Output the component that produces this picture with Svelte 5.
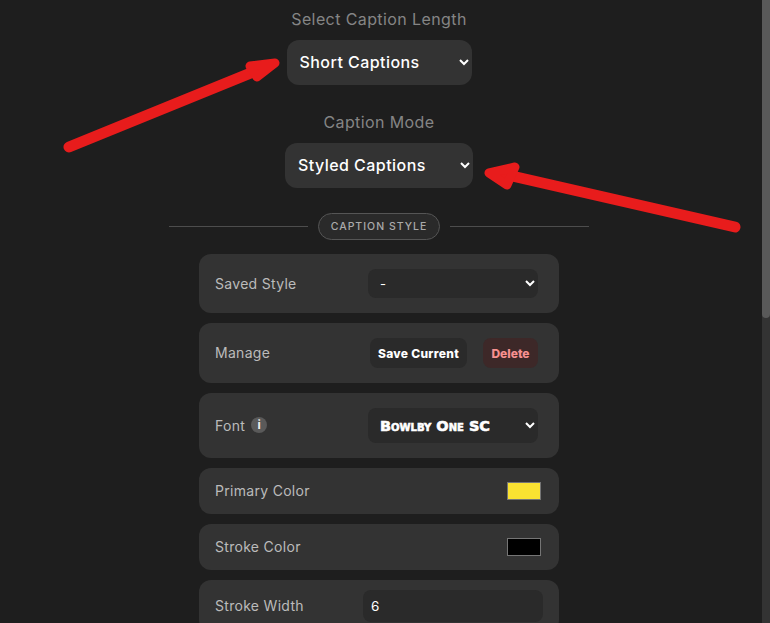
<script>
	let length = $state('short');
	let mode = $state('styled');
	let saved = $state('-');
	let font = $state('Bowlby One SC');
	let strokeWidth = $state(6);
</script>

<div class="page">
	<div class="field first">
		<label for="length">Select Caption Length</label>
		<select id="length" class="big len" bind:value={length}>
			<option value="short">Short Captions</option>
			<option value="long">Long Captions</option>
		</select>
	</div>

	<div class="field second">
		<label for="mode">Caption Mode</label>
		<select id="mode" class="big mode" bind:value={mode}>
			<option value="styled">Styled Captions</option>
			<option value="plain">Plain Captions</option>
		</select>
	</div>

	<div class="divider">
		<span class="line"></span>
		<span class="pill">CAPTION STYLE</span>
		<span class="line"></span>
	</div>

	<div class="rows">
		<div class="row saved">
			<span class="name">Saved Style</span>
			<select class="small" bind:value={saved}>
				<option>-</option>
			</select>
		</div>

		<div class="row manage">
			<span class="name">Manage</span>
			<div class="buttons">
				<button class="save">Save Current</button>
				<button class="delete">Delete</button>
			</div>
		</div>

		<div class="row fontrow">
			<span class="name">Font <i class="info">i</i></span>
			<select class="small bowlby" bind:value={font}>
				<option>Bowlby One SC</option>
			</select>
		</div>

		<div class="row color">
			<span class="name">Primary Color</span>
			<span class="swatch" style="background: #fae231"></span>
		</div>

		<div class="row color">
			<span class="name">Stroke Color</span>
			<span class="swatch" style="background: #000000"></span>
		</div>

		<div class="row widthrow">
			<span class="name">Stroke Width</span>
			<input type="text" bind:value={strokeWidth} />
		</div>
	</div>

	<!-- red annotation arrows drawn over the screenshot -->
	<svg class="arrows" width="770" height="623" viewBox="0 0 770 623">
		<g fill="#e81c1c" stroke="#e81c1c" stroke-linecap="round" stroke-linejoin="round">
			<path d="M69 147 L258 70" stroke-width="11" fill="none" />
			<path d="M250 66 L275 63 L257 77 Z" stroke-width="9" />
			<path d="M735 227 L512 176" stroke-width="11" fill="none" />
			<path d="M515 167 L489 173 L507 185 Z" stroke-width="9" />
		</g>
	</svg>
</div>

<div class="scrollbar"><div class="thumb"></div></div>

<style>
	:global(html) {
		background: #1e1e1e;
		overflow: hidden;
	}

	:global(body) {
		background: #1e1e1e;
	}

	.page {
		position: relative;
		box-sizing: border-box;
		padding: 7px 12px 0 0;
		font-family: Inter, "Noto Sans", sans-serif;
		color: #fff;
	}

	.field {
		display: flex;
		flex-direction: column;
		align-items: center;
	}

	.field label {
		font-size: 16px;
		line-height: 24px;
		letter-spacing: 0.4px;
		color: #858585;
	}

	.first label {
		margin-bottom: 9px;
	}

	.second {
		margin-top: 25px;
	}

	.second label {
		margin-bottom: 9px;
	}

	select,
	input,
	button {
		font-family: inherit;
		border: none;
		color: #fff;
		outline: none;
	}

	.big {
		height: 45px;
		background: #333333;
		border-radius: 12px;
		font-size: 16px;
		font-weight: 450;
		letter-spacing: 0.45px;
		padding: 0 5px 2px 9px;
	}

	.len {
		width: 185px;
	}

	.mode {
		width: 188px;
		padding-right: 7px;
	}

	.divider {
		display: flex;
		align-items: center;
		justify-content: center;
		gap: 10px;
		margin-top: 25px;
	}

	.line {
		width: 139px;
		height: 1px;
		background: #4d4d4d;
	}

	.pill {
		box-sizing: border-box;
		width: 122px;
		height: 27px;
		line-height: 25px;
		text-align: center;
		border: 1px solid #555555;
		border-radius: 14px;
		background: #2a2a2a;
		font-size: 10.5px;
		font-weight: 500;
		letter-spacing: 1px;
		color: #aaaaaa;
	}

	.rows {
		display: flex;
		flex-direction: column;
		gap: 10px;
		width: 360px;
		margin: 14px auto 0;
	}

	.row {
		display: flex;
		align-items: center;
		justify-content: space-between;
		box-sizing: border-box;
		padding: 0 16px;
		background: #333333;
		border-radius: 12px;
	}

	.name {
		display: flex;
		align-items: center;
		gap: 6px;
		padding-bottom: 1px;
		font-size: 14px;
		letter-spacing: 0.3px;
		color: #bbbbbb;
	}

	.saved {
		height: 59px;
	}

	.manage {
		height: 60px;
	}

	.fontrow {
		height: 65px;
	}

	.color {
		height: 46px;
		padding-right: 18px;
	}

	.widthrow {
		height: 52px;
		padding-right: 16px;
	}

	.small {
		width: 170px;
		margin-right: 5px;
		background: #2a2a2a;
		border-radius: 8px;
		font-size: 13px;
		padding: 0 5px 0 8px;
	}

	.saved .small {
		height: 29px;
	}

	.fontrow .small {
		height: 35px;
	}

	.bowlby {
		font-family: "DejaVu Sans", sans-serif;
		font-weight: 900;
		font-variant: small-caps;
		font-size: 14.5px;
		-webkit-text-stroke: 0.6px #fff;
	}

	.buttons {
		display: flex;
		gap: 16px;
		margin-right: 5px;
	}

	button {
		height: 30px;
		padding: 0;
		border-radius: 8px;
		font-size: 12px;
		font-weight: 800;
	}

	.save {
		width: 97px;
		background: #2a2a2a;
		letter-spacing: 0.3px;
	}

	.delete {
		width: 55px;
		background: #3d2828;
		color: #f79090;
	}

	.info {
		display: inline-block;
		width: 16px;
		height: 16px;
		line-height: 16px;
		border-radius: 50%;
		background: #5a5a5a;
		color: #eee;
		text-align: center;
		font-style: normal;
		font-size: 12px;
		font-weight: 700;
	}

	.swatch {
		box-sizing: border-box;
		width: 34px;
		height: 18px;
		border: 1px solid #757575;
	}

	input {
		box-sizing: border-box;
		width: 180px;
		height: 32px;
		padding: 0 8px;
		background: #2a2a2a;
		border-radius: 8px;
		font-size: 13.5px;
	}

	.arrows {
		position: absolute;
		top: 0;
		left: 0;
		pointer-events: none;
	}

	.scrollbar {
		position: fixed;
		top: 0;
		right: 0;
		bottom: 0;
		width: 8px;
		background: #333333;
	}

	.thumb {
		height: 318px;
		background: #595959;
		border-radius: 0 0 4px 4px;
	}
</style>
